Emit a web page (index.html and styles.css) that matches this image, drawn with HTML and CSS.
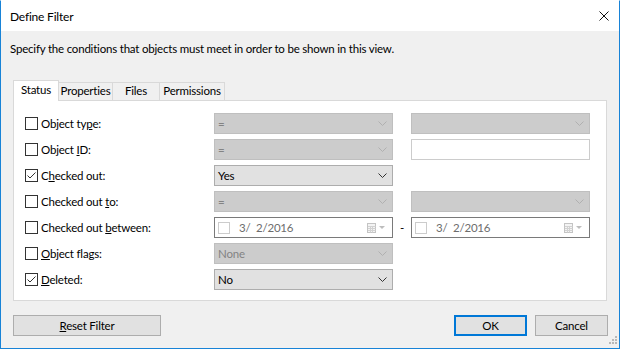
FILE: index.html
```html
<!DOCTYPE html>
<html lang="en">
<head>
    <meta charset="UTF-8">
    <title>Define Filter</title>
    <link rel="stylesheet" href="styles.css">
</head>
<body>
    <div class="window">
        <div class="titlebar">
            <span class="title">Define Filter</span>
            <svg class="close" width="10" height="10" viewBox="0 0 10 10">
                <path d="M0.5 0.5 L9.5 9.5 M9.5 0.5 L0.5 9.5" stroke="#111" stroke-width="1" fill="none"/>
            </svg>
        </div>

        <div class="dialog-body">
            <p class="intro">Specify the conditions that objects must meet in order to be shown in this view.</p>

            <div class="tabs">
                <div class="tab active">Status</div>
                <div class="tab">Properties</div>
                <div class="tab">Files</div>
                <div class="tab">Permissions</div>
            </div>

            <div class="panel">
                <div class="row">
                    <label class="check"><span class="box"></span><span>Object ty<u>p</u>e:</span></label>
                    <div class="combo disabled"><span>=</span><svg class="chev" width="9" height="5" viewBox="0 0 9 5"><path d="M0.5 0.5 L4.5 4.5 L8.5 0.5" fill="none" stroke="currentColor"/></svg></div>
                    <div class="combo disabled c4"><span></span><svg class="chev" width="9" height="5" viewBox="0 0 9 5"><path d="M0.5 0.5 L4.5 4.5 L8.5 0.5" fill="none" stroke="currentColor"/></svg></div>
                </div>

                <div class="row">
                    <label class="check"><span class="box"></span><span>Object <u>I</u>D:</span></label>
                    <div class="combo disabled"><span>=</span><svg class="chev" width="9" height="5" viewBox="0 0 9 5"><path d="M0.5 0.5 L4.5 4.5 L8.5 0.5" fill="none" stroke="currentColor"/></svg></div>
                    <div class="textbox c4"></div>
                </div>

                <div class="row">
                    <label class="check"><span class="box"><svg width="11" height="11" viewBox="0 0 11 11"><path d="M1.5 5.5 L4 8 L9.5 2.5" fill="none" stroke="#333" stroke-width="1"/></svg></span><span>C<u>h</u>ecked out:</span></label>
                    <div class="combo"><span>Yes</span><svg class="chev" width="9" height="5" viewBox="0 0 9 5"><path d="M0.5 0.5 L4.5 4.5 L8.5 0.5" fill="none" stroke="currentColor"/></svg></div>
                </div>

                <div class="row">
                    <label class="check"><span class="box"></span><span>Checked out <u>t</u>o:</span></label>
                    <div class="combo disabled"><span>=</span><svg class="chev" width="9" height="5" viewBox="0 0 9 5"><path d="M0.5 0.5 L4.5 4.5 L8.5 0.5" fill="none" stroke="currentColor"/></svg></div>
                    <div class="combo disabled c4"><span></span><svg class="chev" width="9" height="5" viewBox="0 0 9 5"><path d="M0.5 0.5 L4.5 4.5 L8.5 0.5" fill="none" stroke="currentColor"/></svg></div>
                </div>

                <div class="row">
                    <label class="check"><span class="box"></span><span>Checked out <u>b</u>etween:</span></label>
                    <div class="datebox">
                        <span class="mini-box"></span>
                        <span class="date">3/&nbsp; 2/2016</span>
                        <svg class="cal" width="20" height="10" viewBox="0 0 20 10">
                            <rect x="0.5" y="0.5" width="8" height="9" fill="#f4f4f4" stroke="#c4c4c4"/>
                            <path d="M1 3.5 H8.5 M1 5.5 H8.5 M1 7.5 H8.5 M3.5 3 V9.5 M5.5 3 V9.5" stroke="#d2d2d2" stroke-width="1"/>
                            <path d="M12 3 L18 3 L15 6 Z" fill="#bdbdbd"/>
                        </svg>
                    </div>
                    <span class="sep">-</span>
                    <div class="datebox">
                        <span class="mini-box"></span>
                        <span class="date">3/&nbsp; 2/2016</span>
                        <svg class="cal" width="20" height="10" viewBox="0 0 20 10">
                            <rect x="0.5" y="0.5" width="8" height="9" fill="#f4f4f4" stroke="#c4c4c4"/>
                            <path d="M1 3.5 H8.5 M1 5.5 H8.5 M1 7.5 H8.5 M3.5 3 V9.5 M5.5 3 V9.5" stroke="#d2d2d2" stroke-width="1"/>
                            <path d="M12 3 L18 3 L15 6 Z" fill="#bdbdbd"/>
                        </svg>
                    </div>
                </div>

                <div class="row">
                    <label class="check"><span class="box"></span><span><u>O</u>bject flags:</span></label>
                    <div class="combo disabled"><span>None</span><svg class="chev" width="9" height="5" viewBox="0 0 9 5"><path d="M0.5 0.5 L4.5 4.5 L8.5 0.5" fill="none" stroke="currentColor"/></svg></div>
                </div>

                <div class="row">
                    <label class="check"><span class="box"><svg width="11" height="11" viewBox="0 0 11 11"><path d="M1.5 5.5 L4 8 L9.5 2.5" fill="none" stroke="#333" stroke-width="1"/></svg></span><span><u>D</u>eleted:</span></label>
                    <div class="combo"><span>No</span><svg class="chev" width="9" height="5" viewBox="0 0 9 5"><path d="M0.5 0.5 L4.5 4.5 L8.5 0.5" fill="none" stroke="currentColor"/></svg></div>
                </div>
            </div>

            <div class="actions">
                <button class="btn reset"><u>R</u>eset Filter</button>
                <div class="right-buttons">
                    <button class="btn default">OK</button>
                    <button class="btn">Cancel</button>
                </div>
            </div>
        </div>

        <svg class="grip" width="10" height="10" viewBox="0 0 10 10">
            <rect x="8" y="0" width="2" height="2" fill="#b8b8b8"/>
            <rect x="5" y="3" width="2" height="2" fill="#b8b8b8"/>
            <rect x="8" y="3" width="2" height="2" fill="#b8b8b8"/>
            <rect x="2" y="6" width="2" height="2" fill="#b8b8b8"/>
            <rect x="5" y="6" width="2" height="2" fill="#b8b8b8"/>
            <rect x="8" y="6" width="2" height="2" fill="#b8b8b8"/>
        </svg>
    </div>
</body>
</html>
```

FILE: styles.css
```css
body {
    margin: 0;
    font-family: "Lato", "Liberation Sans", sans-serif;
    font-size: 11.5px;
    letter-spacing: -0.2px;
    color: #000;
    background-color: #f0f0f0;
}

.window {
    position: relative;
    box-sizing: border-box;
    width: 620px;
    height: 349px;
    border: 1px solid #1883d7;
    border-top-color: #ffffff;
    background-color: #f0f0f0;
    display: flex;
    flex-direction: column;
}

.titlebar {
    height: 30px;
    background-color: #fff;
    display: flex;
    align-items: center;
    justify-content: space-between;
    padding: 0 10px 0 9px;
}

.title {
    font-size: 12px;
    margin-top: 1px;
}

.dialog-body {
    flex: 1;
    padding: 0 12px;
}

.intro {
    margin: 10px 0 0 -3px;
    line-height: 16px;
    height: 16px;
}

.tabs {
    display: flex;
    align-items: flex-end;
    margin-top: 23px;
    height: 20px;
    position: relative;
    z-index: 1;
}

.tab {
    box-sizing: border-box;
    height: 18px;
    line-height: 16px;
    padding: 0;
    text-align: center;
    white-space: nowrap;
    background-color: #f0f0f0;
    border: 1px solid #d9d9d9;
    border-bottom: none;
    margin-left: -1px;
}

.tab:first-child {
    margin-left: 0;
}

.tab.active {
    height: 21px;
    margin-bottom: -1px;
    background-color: #fff;
    padding-top: 1px;
}

.tabs .tab.active { width: 46px; }
.tabs .tab:nth-child(2) { width: 55px; }
.tabs .tab:nth-child(3) { width: 48px; }
.tabs .tab:nth-child(4) { width: 66px; }

.panel {
    box-sizing: border-box;
    height: 201px;
    background-color: #fff;
    border: 1px solid #d9d9d9;
    padding: 12px 0 0 11px;
    display: flex;
    flex-direction: column;
    gap: 5px;
}

.row {
    display: grid;
    grid-template-columns: 189px 179px 18px 179px;
    height: 21px;
    align-items: center;
}

.c4 {
    grid-column: 4;
}

.check {
    display: flex;
    align-items: center;
    gap: 3px;
    white-space: nowrap;
}

.box {
    box-sizing: border-box;
    width: 13px;
    height: 13px;
    border: 1px solid #333;
    background-color: #fff;
    display: flex;
}

.combo {
    box-sizing: border-box;
    height: 21px;
    display: flex;
    align-items: center;
    justify-content: space-between;
    padding: 0 5px 0 3px;
    background-color: #e1e1e1;
    border: 1px solid #adadad;
    color: #000;
}

.combo .chev {
    color: #333;
}

.combo.disabled {
    background-color: #cccccc;
    border-color: #bfbfbf;
    color: #838383;
}

.combo.disabled .chev {
    color: #b0b0b0;
}

.textbox {
    box-sizing: border-box;
    height: 21px;
    background-color: #fff;
    border: 1px solid #cccccc;
}

.datebox {
    box-sizing: border-box;
    height: 21px;
    display: flex;
    align-items: center;
    border: 1px solid #7a7a7a;
    background-color: #fff;
    padding: 0 5px 0 3px;
    color: #6d6d6d;
}

.mini-box {
    box-sizing: border-box;
    width: 12px;
    height: 12px;
    border: 1px solid #cccccc;
}

.date {
    margin-left: 9px;
    flex: 1;
}

.sep {
    text-align: center;
    color: #000;
}

.actions {
    display: flex;
    justify-content: space-between;
    margin-top: 14px;
}

.right-buttons {
    display: flex;
    gap: 8px;
    margin-right: -1px;
}

.btn {
    box-sizing: border-box;
    height: 21px;
    width: 73px;
    font-family: "Lato", "Liberation Sans", sans-serif;
    font-size: 11.5px;
    letter-spacing: -0.2px;
    background-color: #e1e1e1;
    border: 1px solid #adadad;
    padding: 0;
    color: #000;
}

.btn.reset {
    width: 148px;
}

.btn.default {
    border: 2px solid #0078d7;
}

.grip {
    position: absolute;
    right: 2px;
    bottom: 2px;
}
```
